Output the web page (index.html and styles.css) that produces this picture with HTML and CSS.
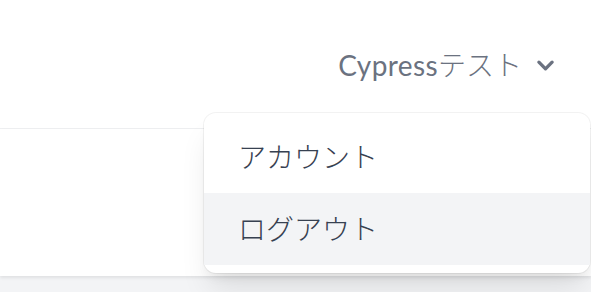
FILE: index.html
```html
<!DOCTYPE html>
<html lang="ja">
<head>
<meta charset="utf-8">
<link rel="stylesheet" href="styles.css">
</head>
<body>
<div class="page">
  <header class="topbar">
    <button class="user-btn" type="button">
      <span class="user-name">Cypress<span class="user-name-ja">テスト</span></span>
      <svg class="chevron" viewBox="0 0 20 20" fill="currentColor" aria-hidden="true">
        <path fill-rule="evenodd" d="M5.293 7.293a1 1 0 011.414 0L10 10.586l3.293-3.293a1 1 0 111.414 1.414l-4 4a1 1 0 01-1.414 0l-4-4a1 1 0 010-1.414z" clip-rule="evenodd"/>
      </svg>
    </button>
  </header>
  <main class="card"></main>
  <div class="menu" role="menu">
    <a class="menu-item" role="menuitem">アカウント</a>
    <a class="menu-item is-active" role="menuitem">ログアウト</a>
  </div>
</div>
</body>
</html>
```

FILE: styles.css
```css
* { box-sizing: border-box; }
html, body {
  margin: 0;
  padding: 0;
  background: #f3f4f6;
  font-family: Lato, "Noto Sans CJK JP", sans-serif;
}
.page {
  position: relative;
  width: 591px;
  height: 292px;
  overflow: hidden;
}
.topbar {
  height: 129px;
  background: #ffffff;
  border-bottom: 1px solid #eeeff1;
  display: flex;
  justify-content: flex-end;
  align-items: center;
  padding: 2px 29px 0 0;
}
.user-btn {
  display: flex;
  align-items: center;
  background: none;
  border: 0;
  padding: 0;
  color: #6b7280;
  font: inherit;
  font-size: 28px;
  line-height: 40px;
  font-weight: 400;
}
.user-name {
  letter-spacing: 0.4px;
}
.user-name-ja {
  font-weight: 300;
  letter-spacing: 0;
}
.chevron {
  width: 33px;
  height: 33px;
  margin-left: 7px;
  margin-top: 1px;
}
.card {
  height: 147px;
  background: #ffffff;
  box-shadow: 0 2px 3px rgba(0,0,0,0.08);
}
.menu {
  position: absolute;
  top: 113px;
  left: 204px;
  width: 386px;
  padding: 8px 0;
  background: #ffffff;
  border-radius: 12px;
  box-shadow: 0 0 0 1px rgba(0,0,0,0.05), 0 20px 30px -6px rgba(0,0,0,0.10), 0 8px 12px -4px rgba(0,0,0,0.06);
}
.menu-item {
  display: block;
  padding: 16px 32px 16px 34px;
  font-size: 28px;
  line-height: 40px;
  font-weight: 300;
  color: #374151;
  text-decoration: none;
}
.menu-item.is-active {
  background: #f3f4f6;
}
```
